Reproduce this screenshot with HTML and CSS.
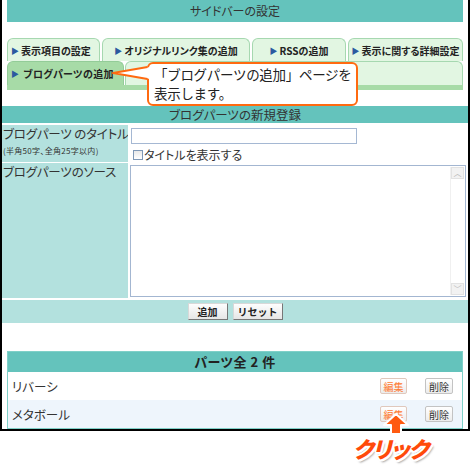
FILE: index.html
```html
<!DOCTYPE html>
<html lang="ja">
<head>
<meta charset="utf-8">
<title>サイドバーの設定</title>
<link rel="stylesheet" href="styles.css">
</head>
<body>
<div class="page">
  <div class="frame">
    <div class="page-head">サイドバーの設定</div>

    <div class="tabs">
      <div class="tab-row">
        <div class="tab t1"><span class="tri">▶</span>表示項目の設定</div>
        <div class="tab t2"><span class="tri">▶</span>オリジナルリンク集の追加</div>
        <div class="tab t3"><span class="tri">▶</span>RSSの追加</div>
        <div class="tab t4"><span class="tri">▶</span>表示に関する詳細設定</div>
      </div>
      <div class="tab-row row2">
        <div class="tab active"><span class="tri">▶</span>ブログパーツの追加</div>
        <div class="tab blank"></div>
      </div>
      <div class="tab-bar"></div>
    </div>

    <div class="form">
      <div class="form-head">ブログパーツの新規登録</div>
      <div class="form-grid">
        <div class="label r1">
          <div class="label-main">ブログパーツ のタイトル</div>
          <div class="label-sub">(半角50字、全角25字以内)</div>
        </div>
        <div class="field r1">
          <input class="text-input" type="text">
          <label class="check"><input type="checkbox">タイトルを表示する</label>
        </div>
        <div class="label r2"><div class="label-main">ブログパーツのソース</div></div>
        <div class="field r2">
          <div class="ta-wrap">
            <textarea class="ta"></textarea>
            <div class="sbar">
              <span class="sbtn">︿</span>
              <span class="sbtn">﹀</span>
            </div>
          </div>
        </div>
        <div class="actions">
          <button class="btn b-add">追加</button>
          <button class="btn b-reset">リセット</button>
        </div>
      </div>
    </div>

    <div class="list">
      <div class="list-head">パーツ全 2 件</div>
      <div class="list-row">
        <span class="name">リバーシ</span>
        <span class="ops"><button class="sbtn2 edit">編集</button><button class="sbtn2 del">削除</button></span>
      </div>
      <div class="list-row alt">
        <span class="name">メタボール</span>
        <span class="ops"><button class="sbtn2 edit">編集</button><button class="sbtn2 del">削除</button></span>
      </div>
    </div>
  </div>

  <div class="callout">「ブログパーツの追加」ページを<br>表示します。</div>
  <svg class="callout-tail" width="42" height="18" viewBox="0 0 42 18">
    <polygon points="40,2 3,8 40,14" fill="#fff"/>
    <polyline points="37.5,2 3,8 37.5,14" fill="none" stroke="#ff6a10" stroke-width="2" stroke-linejoin="round"/>
  </svg>

  <svg class="click-arrow" width="28" height="24" viewBox="0 0 28 24">
    <polygon points="14,2 26,13 19,13 19,22 9,22 9,13 2,13" fill="#ff5a10" stroke="#fff" stroke-width="2" stroke-linejoin="round"/>
  </svg>
  <div class="click-label">クリック</div>
</div>
</body>
</html>
```
FILE: styles.css
```css
* { box-sizing: border-box; }
html, body { margin: 0; padding: 0; background: #fff; }
body {
  font-family: "Noto Sans CJK JP", "Noto Sans", sans-serif;
  font-feature-settings: "palt";
  color: #333;
}
.page { position: relative; width: 470px; height: 465px; }
.frame {
  width: 470px;
  border: 2px solid #000;
  border-top: none;
}
.page-head {
  margin: 0 5px;
  height: 22px;
  background: #64c3bc;
  text-align: center;
  font-size: 12px;
  line-height: 22px;
  color: #333;
}
.tabs { margin: 16px 5px 0; }
.tab-row { display: flex; gap: 2px; height: 23px; }
.tab {
  background: #e2f6e2;
  border: 1px solid #a6d8b0;
  border-bottom: none;
  border-radius: 6px 6px 0 0;
  font-size: 10px;
  font-weight: bold;
  color: #222;
  display: flex;
  align-items: center;
  justify-content: center;
  white-space: nowrap;
}
.tri { color: #2b5aa0; font-size: 8px; margin-right: 2px; }
.t1 { width: 93px; justify-content: flex-start; padding-left: 3px; }
.t2 { width: 148px; }
.t3 { width: 94px; }
.t4 { width: 115px; }
.row2 { height: 24px; gap: 1px; }
.active {
  width: 117px;
  background: #a7dba7;
  border-color: #93cc98;
  justify-content: flex-start;
  padding-left: 3px;
  letter-spacing: 0.3px;
}
.active .tri { margin-right: 4px; }
.blank { flex: 1; }
.tab-bar { height: 5px; background: #a7dba7; }

.form { margin-top: 16px; }
.form-head {
  height: 17px;
  background: #64c3bc;
  text-align: center;
  font-size: 12.5px;
  line-height: 17px;
  color: #333;
}
.form-grid {
  display: grid;
  grid-template-columns: 126px 1fr;
  grid-template-rows: 37px 135px 24px;
  row-gap: 1px;
  padding-top: 2px;
  background: #fff;
}
.actions { grid-column: 1 / 3; margin-top: 1px; }
.label { background: #b3e1de; padding: 1px 0 0 1px; white-space: nowrap; overflow: hidden; }
.label-main { font-size: 12.5px; line-height: 16px; color: #333; letter-spacing: -0.2px; }
.label-sub { font-size: 8px; line-height: 12px; margin-top: 3px; color: #333; letter-spacing: 0.3px; }
.field { padding: 3px 0 0 3px; }
.text-input {
  display: block;
  width: 226px;
  height: 16px;
  margin: 0;
  border: 1px solid #a5b8d3;
  padding: 0;
  background: #fff;
}
.check {
  display: flex;
  align-items: center;
  font-size: 12px;
  line-height: 16px;
  margin-top: 3px;
  margin-left: 2px;
  color: #333;
}
.check input {
  appearance: none;
  width: 10px;
  height: 10px;
  margin: 0 1px 0 0;
  border: 1px solid #7f98b6;
  background: linear-gradient(#e8e8e8, #fff);
}
.r2.field { padding: 2px 2px 0 2px; }
.ta-wrap {
  position: relative;
  height: 132px;
  border: 1px solid #a3b6d1;
  background: #fff;
}
.ta {
  display: block;
  width: 100%;
  height: 100%;
  border: none;
  resize: none;
  outline: none;
  padding: 0;
  background: transparent;
  overflow: hidden;
}
.sbar {
  position: absolute;
  top: 1px;
  right: 1px;
  bottom: 1px;
  width: 14px;
  border-left: 1px solid #f0f0f0;
  display: flex;
  flex-direction: column;
  justify-content: space-between;
}
.sbtn {
  display: block;
  height: 12px;
  background: #f2f2f2;
  border: 1px solid #e2e2e2;
  font-size: 8px;
  line-height: 10px;
  text-align: center;
  color: #b8b8b8;
}
.actions {
  background: #b3e1de;
  display: flex;
  justify-content: center;
  align-items: center;
  gap: 5px;
}
.btn {
  height: 17px;
  padding: 0;
  font-family: inherit;
  font-size: 10px;
  font-weight: bold;
  color: #222;
  background: linear-gradient(#fdfdfd, #e6e6e6);
  border: 1px solid;
  border-color: #d8d8d8 #777 #777 #d8d8d8;
  border-radius: 0;
  line-height: 14px;
}
.b-add { width: 40px; }
.b-reset { width: 50px; }

.list {
  margin: 28px 5px 0;
  border: 1px solid #7fd0c8;
}
.list-head {
  height: 20px;
  background: #64c3bc;
  text-align: center;
  font-size: 13px;
  font-weight: bold;
  line-height: 20px;
  color: #222;
  letter-spacing: 0.5px;
}
.list-row {
  height: 28px;
  display: flex;
  align-items: center;
  justify-content: space-between;
  padding: 0 9px 0 4px;
  background: #fff;
  font-size: 12.5px;
  color: #333;
}
.list-row.alt { background: #eef5fc; }
.ops { display: flex; gap: 18px; }
.sbtn2 {
  height: 16px;
  padding: 0;
  font-family: inherit;
  font-size: 10px;
  line-height: 13px;
  background: linear-gradient(#fff, #ececec);
  border: 1px solid #c3c3c3;
  border-radius: 2px;
  color: #333;
}
.sbtn2.edit { width: 27px; color: #ff7a30; border-color: #e0c8bc; }
.sbtn2.del { width: 28px; }

.callout {
  position: absolute;
  left: 147px;
  top: 62px;
  width: 211px;
  height: 44px;
  border: 2px solid #ff6a10;
  border-radius: 6px;
  background: #fff;
  padding: 1px 0 0 5px;
  font-size: 13.5px;
  line-height: 19px;
  color: #222;
  font-feature-settings: normal;
  letter-spacing: -0.3px;
}
.callout-tail { position: absolute; left: 110px; top: 65px; }
.click-arrow { position: absolute; left: 382px; top: 412px; }
.click-label {
  position: absolute;
  left: 353px;
  top: 433px;
  font-size: 22.5px;
  font-weight: 900;
  line-height: 30px;
  color: #ff4a0a;
  font-style: italic;
  letter-spacing: -1px;
  text-shadow:
    2px 0 0 #fff, -2px 0 0 #fff, 0 2px 0 #fff, 0 -2px 0 #fff,
    1.5px 1.5px 0 #fff, -1.5px 1.5px 0 #fff, 1.5px -1.5px 0 #fff, -1.5px -1.5px 0 #fff,
    2px 3px 2px rgba(0,0,0,0.35);
}
```
